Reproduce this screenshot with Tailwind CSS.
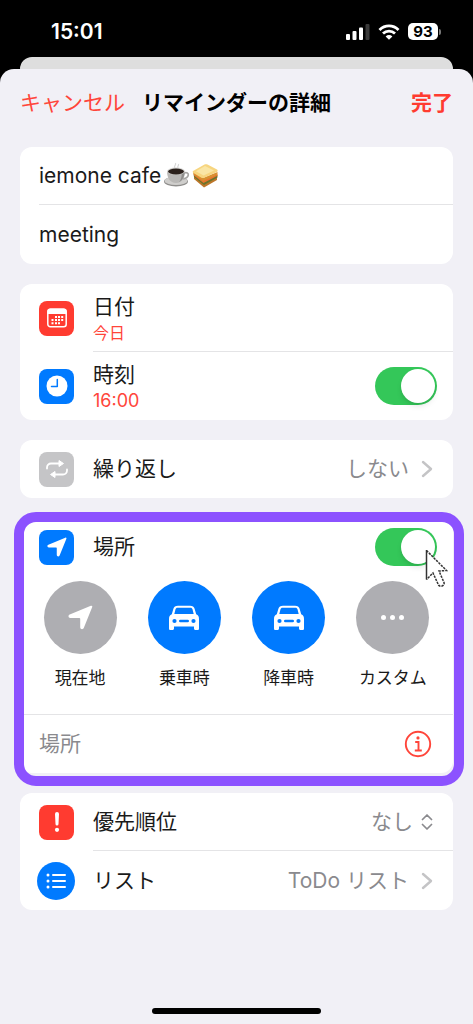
<!DOCTYPE html>
<html lang="ja">
<head>
<meta charset="utf-8">
<meta name="viewport" content="width=device-width, initial-scale=1">
<title>リマインダーの詳細</title>
<script src="https://cdn.jsdelivr.net/npm/@tailwindcss/browser@4"></script>
</head>
<body class="bg-black font-['Inter','Noto_Sans_CJK_JP',sans-serif] text-[21px] leading-7 text-[#1a1a1a]">
<svg class="hidden" aria-hidden="true">
  <symbol id="arrow" viewBox="0 0 26 26"><path d="M25.200 2.200 16.400 24c-.8 1.900-3.700 1.500-3.700-.8V14.400c0-.6-.3-.9-.9-.9H2.400C.2 13.500-.2 10.900 1.800 10L23.800.900c1-.4 1.800.3 1.400 1.300z" fill="currentColor"/></symbol>
  <symbol id="car" viewBox="0 0 32 26"><path fill="currentColor" fill-rule="evenodd" d="M10 .8h12c2.600 0 4 .9 4.600 3L28.200 9.300c2 1 2.800 2.400 2.800 4.600V23.500c0 1-.6 1.500-1.500 1.500h-2c-.9 0-1.500-.6-1.500-1.500V21.500H6v2c0 .9-.6 1.500-1.500 1.500h-2C1.600 25 1 24.500 1 23.500V13.900C1 11.700 1.800 10.300 3.800 9.300L5.400 3.800C6 1.700 7.400.8 10 .8zM9.800 2.700c-1.500 0-2 .5-2.300 1.600L6.300 9h19.400L24.500 4.300c-.3-1.100-.8-1.600-2.300-1.600zM6.500 13.900a2.100 2.100 0 1 0 0 4.200 2.100 2.100 0 0 0 0-4.200zM25.500 13.900a2.100 2.100 0 1 0 0 4.200 2.100 2.100 0 0 0 0-4.200zM12.300 14.700a1.300 1.300 0 0 0 0 2.600h7.400a1.300 1.300 0 0 0 0-2.600z"/></symbol>
  <symbol id="chevron" viewBox="0 0 12 18"><path d="M2 2l8 7-8 7" fill="none" stroke="currentColor" stroke-width="2.400" stroke-linecap="round" stroke-linejoin="round"/></symbol>
</svg>
<div class="flex min-h-screen flex-col">
  <div class="flex h-[57px] items-center justify-between pt-1.5 pr-8 pl-[51px] text-white">
    <time class="font-semibold">15:01</time>
    <div class="flex items-center gap-2">
      <svg class="h-4 w-6" viewBox="0 0 24 16" fill="#fff" aria-label="電波"><rect x="0" y="10" width="4" height="6" rx="1"/><rect x="6.500" y="7" width="4" height="9" rx="1"/><rect x="13" y="3.500" width="4" height="12.500" rx="1"/><rect x="19.500" y="0" width="4" height="16" rx="1" fill="#3a3a3a"/></svg>
      <svg class="h-4 w-[22px]" viewBox="0 0 22 16" fill="none" stroke="#fff" stroke-width="2.800" aria-label="Wi-Fi"><path d="M1.500 6C6.800.6 15.200.6 20.500 6M5 9.600c3.400-3.300 8.600-3.300 12 0"/><path d="M11 15.800 7.600 12.400c2-1.800 4.800-1.800 6.800 0z" fill="#fff" stroke="none"/></svg>
      <div class="flex items-center gap-px">
        <span class="flex h-[17px] w-[30px] items-center justify-center rounded-[5px] bg-white text-[15px] leading-4 font-bold text-black">93</span>
        <span class="h-1.5 w-0.5 rounded-r-full bg-[#777]"></span>
      </div>
    </div>
  </div>
  <div class="mx-5 h-3 rounded-t-xl bg-[#dedede]"></div>
  <div class="flex grow flex-col rounded-t-[14px] bg-[#f1f0f6]">
    <header class="grid grid-cols-[1fr_auto_1fr] items-center px-5 pt-5 pb-[30px]">
      <button class="justify-self-start text-[#ff453a]">キャンセル</button>
      <h1 class="font-bold text-black">リマインダーの詳細</h1>
      <button class="justify-self-end font-bold text-[#ff3b30]">完了</button>
    </header>
    <main class="flex flex-col gap-5 px-5">
      <section class="rounded-xl bg-white pl-[19px]">
        <div class="flex h-[58px] items-center border-b border-[#e4e4e6]">
          <input aria-label="タイトル" value="iemone cafe" class="field-sizing-content outline-none">
          <svg class="ml-0.5 size-[27px]" viewBox="0 0 27 27" role="img" aria-label="コーヒー">
            <path d="M12 6c-2-2 1.500-2.500.5-5M15 6c-1-2 1-2 .500-4" stroke="#d8d8d8" stroke-width="1.200" fill="none"/>
            <ellipse cx="13" cy="19.500" rx="12" ry="5" fill="#8f8e8c"/><ellipse cx="13" cy="18.700" rx="11.500" ry="4.300" fill="#cfcecc"/>
            <path d="M21 11c6-2 6 5-1.500 6" stroke="#a5a4a2" stroke-width="1.700" fill="none"/>
            <path d="M4 9c0 7 3 12 9 12s9-5 9-12z" fill="#b9b8b6"/><path d="M16 20c4-2 5.500-6 6-11h-3c0 5-1 9-3 11z" fill="#8f8e8c"/>
            <ellipse cx="13" cy="9.200" rx="9" ry="3.600" fill="#d6d5d3"/><ellipse cx="13" cy="9.500" rx="8" ry="2.900" fill="#2b211c"/>
          </svg>
          <svg class="ml-0.5 size-[27px]" viewBox="0 0 27 27" role="img" aria-label="サンドイッチ">
            <path d="M2 13l9 8 14-6v3l-13 7.500L2 17z" fill="#bd7629"/>
            <path d="M1.500 12l9.500 7 14.500-6v2.500L12 23 2 15z" fill="#69752c"/>
            <path d="M1.500 11l9.500 7 14.500-6v1.800L11.500 21 2 13.500z" fill="#e8762f"/>
            <path d="M1 9.500 11 16l14.500-6v2.500L11 19 1.500 12z" fill="#d99131"/>
            <path d="M1 9 12.500 2.500c1-.5 2-.4 3 0L25 7.500c1 .7.8 2-.2 2.500L12 15.800c-1 .4-2 .2-3-.4L1.500 11C.6 10.400.5 9.500 1 9z" fill="#f7d57f"/>
            <path d="M4 9.300 13 4l9 4.500-10.500 5z" fill="#fae6a5"/>
          </svg>
        </div>
        <div class="flex h-[59px] items-center"><input aria-label="メモ" value="meeting" class="w-full outline-none"></div>
      </section>

      <section class="rounded-xl bg-white pl-[19px]">
        <div class="flex h-[68px] items-center">
          <span class="flex size-[35px] items-center justify-center rounded-lg bg-[#ff3b30]">
            <svg class="size-[22px]" viewBox="0 0 22 22"><rect x="1.800" y="2.300" width="18.400" height="17.400" rx="2.500" fill="none" stroke="#fff" stroke-width="1.500"/><path d="M1.500 7V4.500a3 3 0 0 1 3-3h13a3 3 0 0 1 3 3V7z" fill="#fff"/><g fill="#fff"><path d="M9 9h2v2H9zM12 9h2v2h-2zM15.200 9h2v2h-2zM5.500 12h2v2h-2zM9 12h2v2H9zM12 12h2v2h-2zM15.200 12h2v2h-2zM5.500 15.200h2v2h-2zM9 15.200h2v2H9zM12 15.200h2v2h-2z"/></g></svg>
          </span>
          <button class="ml-[19px] h-full grow border-b border-[#e4e4e6] text-left"><span class="block leading-[30px]">日付</span><span class="block text-base leading-[22px] text-[#ff453a]">今日</span></button>
        </div>
        <div class="flex h-[68px] items-center pr-4">
          <span class="flex size-[35px] items-center justify-center rounded-lg bg-[#007aff]">
            <svg class="size-[22px]" viewBox="0 0 22 22"><circle cx="11" cy="11" r="10.500" fill="#fff"/><path d="M11.300 4.500V11.500H5.500" fill="none" stroke="#007aff" stroke-width="1.500" stroke-linecap="round" stroke-linejoin="round"/></svg>
          </span>
          <label for="time" class="ml-[19px] grow"><span class="block leading-[30px]">時刻</span><span class="block text-lg leading-[22px] text-[#ff453a]">16:00</span></label>
          <input id="time" type="checkbox" role="switch" checked class="flex h-[38px] w-[62px] appearance-none items-center rounded-full bg-[#c7c7cc] p-0.5 before:size-[34px] before:rounded-full before:bg-white before:shadow-md checked:justify-end checked:bg-[#34c759]">
        </div>
      </section>

      <section class="rounded-xl bg-white">
        <button class="flex h-[58px] w-full items-center pr-5 pl-[19px]">
          <span class="flex size-[35px] items-center justify-center rounded-lg bg-[#c5c5c7]">
            <svg class="h-5 w-6" viewBox="0 0 24 20"><g fill="none" stroke="#fff" stroke-width="1.800" stroke-linecap="round"><path d="M2 9.500V8.500a4 4 0 0 1 4-4h9M22 10.500v1a4 4 0 0 1-4 4H9"/></g><path d="M14 1.500v6L18.500 4.500zM10 12.500v6L5.500 15.500z" fill="#fff" stroke="#fff" stroke-linejoin="round"/></svg>
          </span>
          <span class="ml-[19px]">繰り返し</span>
          <span class="ml-auto text-[#8a8a8e]">しない</span>
          <svg class="ml-3 h-[18px] w-3 text-[#c4c4c6]"><use href="#chevron"/></svg>
        </button>
      </section>

      <section class="relative rounded-xl bg-white">
        <div class="flex h-[58px] items-center pr-4 pl-[19px]">
          <span class="flex size-[35px] items-center justify-center rounded-lg bg-[#007aff] text-white"><svg class="size-5"><use href="#arrow"/></svg></span>
          <label for="place-on" class="ml-[19px] grow">場所</label>
          <input id="place-on" type="checkbox" role="switch" checked class="flex h-[38px] w-[62px] appearance-none items-center rounded-full bg-[#c7c7cc] p-0.5 before:size-[34px] before:rounded-full before:bg-white before:shadow-md checked:justify-end checked:bg-[#34c759]">
        </div>
        <div class="grid grid-cols-4 px-2 pt-[5px] pb-6 text-[17px] leading-6">
          <button class="flex flex-col items-center gap-3"><span class="flex size-[73px] items-center justify-center rounded-full bg-[#aeaeb2] text-white"><svg class="size-[25px]"><use href="#arrow"/></svg></span>現在地</button>
          <button class="flex flex-col items-center gap-3"><span class="flex size-[73px] items-center justify-center rounded-full bg-[#007aff] text-white"><svg class="h-[26px] w-8"><use href="#car"/></svg></span>乗車時</button>
          <button class="flex flex-col items-center gap-3"><span class="flex size-[73px] items-center justify-center rounded-full bg-[#007aff] text-white"><svg class="h-[26px] w-8"><use href="#car"/></svg></span>降車時</button>
          <button class="flex flex-col items-center gap-3"><span class="flex size-[73px] items-center justify-center gap-1 rounded-full bg-[#aeaeb2]"><i class="size-[5px] rounded-full bg-white"></i><i class="size-[5px] rounded-full bg-white"></i><i class="size-[5px] rounded-full bg-white"></i></span>カスタム</button>
        </div>
        <div class="flex h-[59px] items-center border-t border-[#e4e4e6] pr-[21px] pl-[19px]">
          <input aria-label="場所" placeholder="場所" class="min-w-0 grow outline-none placeholder:text-[#8a8a8e]">
          <button aria-label="情報"><svg class="size-7" viewBox="0 0 28 28" fill="none" stroke="#ff453a" stroke-width="1.900"><circle cx="14" cy="14" r="12.200"/><path d="M11.200 12h3.300v8.200M10.800 20.500h7"/><circle cx="14" cy="7.900" r="1.600" fill="#ff453a" stroke="none"/></svg></button>
        </div>
        <div class="pointer-events-none absolute -top-1.5 -right-[11px] -bottom-[13px] -left-1.5 rounded-[22px] border-10 border-[#8c52ff]"></div>
        <svg class="pointer-events-none absolute top-[31px] right-[5px] h-[39px] w-[23px]" viewBox="0 0 23 39" aria-hidden="true"><path d="M1.500 1.500v29L8 24l5.500 12c1.500 2.500 6.500 1 5.500-2.500L14 22l7.500-.5z" fill="#fff"/><path d="M1.500 1v29.500" stroke="#333" stroke-width="1.500"/><path d="M1.500 1.500 21.500 21.500 14 22l5 11.500c1 3.500-4 5-5.500 2.500L8 24l-6.500 6.500" fill="none" stroke="#333" stroke-width="1.500" stroke-dasharray="2.400 1"/></svg>
      </section>

      <section class="rounded-xl bg-white pl-[19px]">
        <div class="flex h-[58px] items-center">
          <span class="flex size-[35px] items-center justify-center rounded-lg bg-[#ff3b30]"><svg class="h-5 w-1.5" viewBox="0 0 6 20" fill="#fff"><path d="M1 2a2 2 0 0 1 4 0L4.500 12a1.500 1.500 0 0 1-3 0z"/><circle cx="3" cy="17.800" r="2.100"/></svg></span>
          <div class="ml-[19px] flex h-full grow items-center border-b border-[#e4e4e6] pr-5">
            <label for="priority" class="grow">優先順位</label>
            <select id="priority" class="field-sizing-content appearance-none text-[#8a8a8e]"><option>なし</option></select>
            <svg class="ml-2 h-4 w-3" viewBox="0 0 12 16" fill="none" stroke="#8a8a8e" stroke-width="1.700" stroke-linecap="round" stroke-linejoin="round"><path d="M1.500 5.500 6 1l4.500 4.500M1.500 10.500 6 15l4.500-4.500"/></svg>
          </div>
        </div>
        <button class="flex h-[59px] w-full items-center pr-5">
          <span class="-ml-0.5 flex size-[38px] items-center justify-center rounded-full bg-[#007aff]"><svg class="h-4 w-5" viewBox="0 0 20 16" stroke="#fff" stroke-width="2" stroke-linecap="round" fill="#fff"><path d="M7 2h12M7 8h12M7 14h12"/><g stroke="none"><circle cx="2" cy="2" r="1.500"/><circle cx="2" cy="8" r="1.500"/><circle cx="2" cy="14" r="1.500"/></g></svg></span>
          <span class="ml-[18px]">リスト</span>
          <span class="ml-auto text-[#8a8a8e]">ToDo リスト</span>
          <svg class="ml-3 h-[18px] w-3 text-[#c4c4c6]"><use href="#chevron"/></svg>
        </button>
      </section>
    </main>
    <div class="mt-auto flex justify-center pb-2.5"><div class="h-1.5 w-[169px] rounded-full bg-black"></div></div>
  </div>
</div>
</body>
</html>
